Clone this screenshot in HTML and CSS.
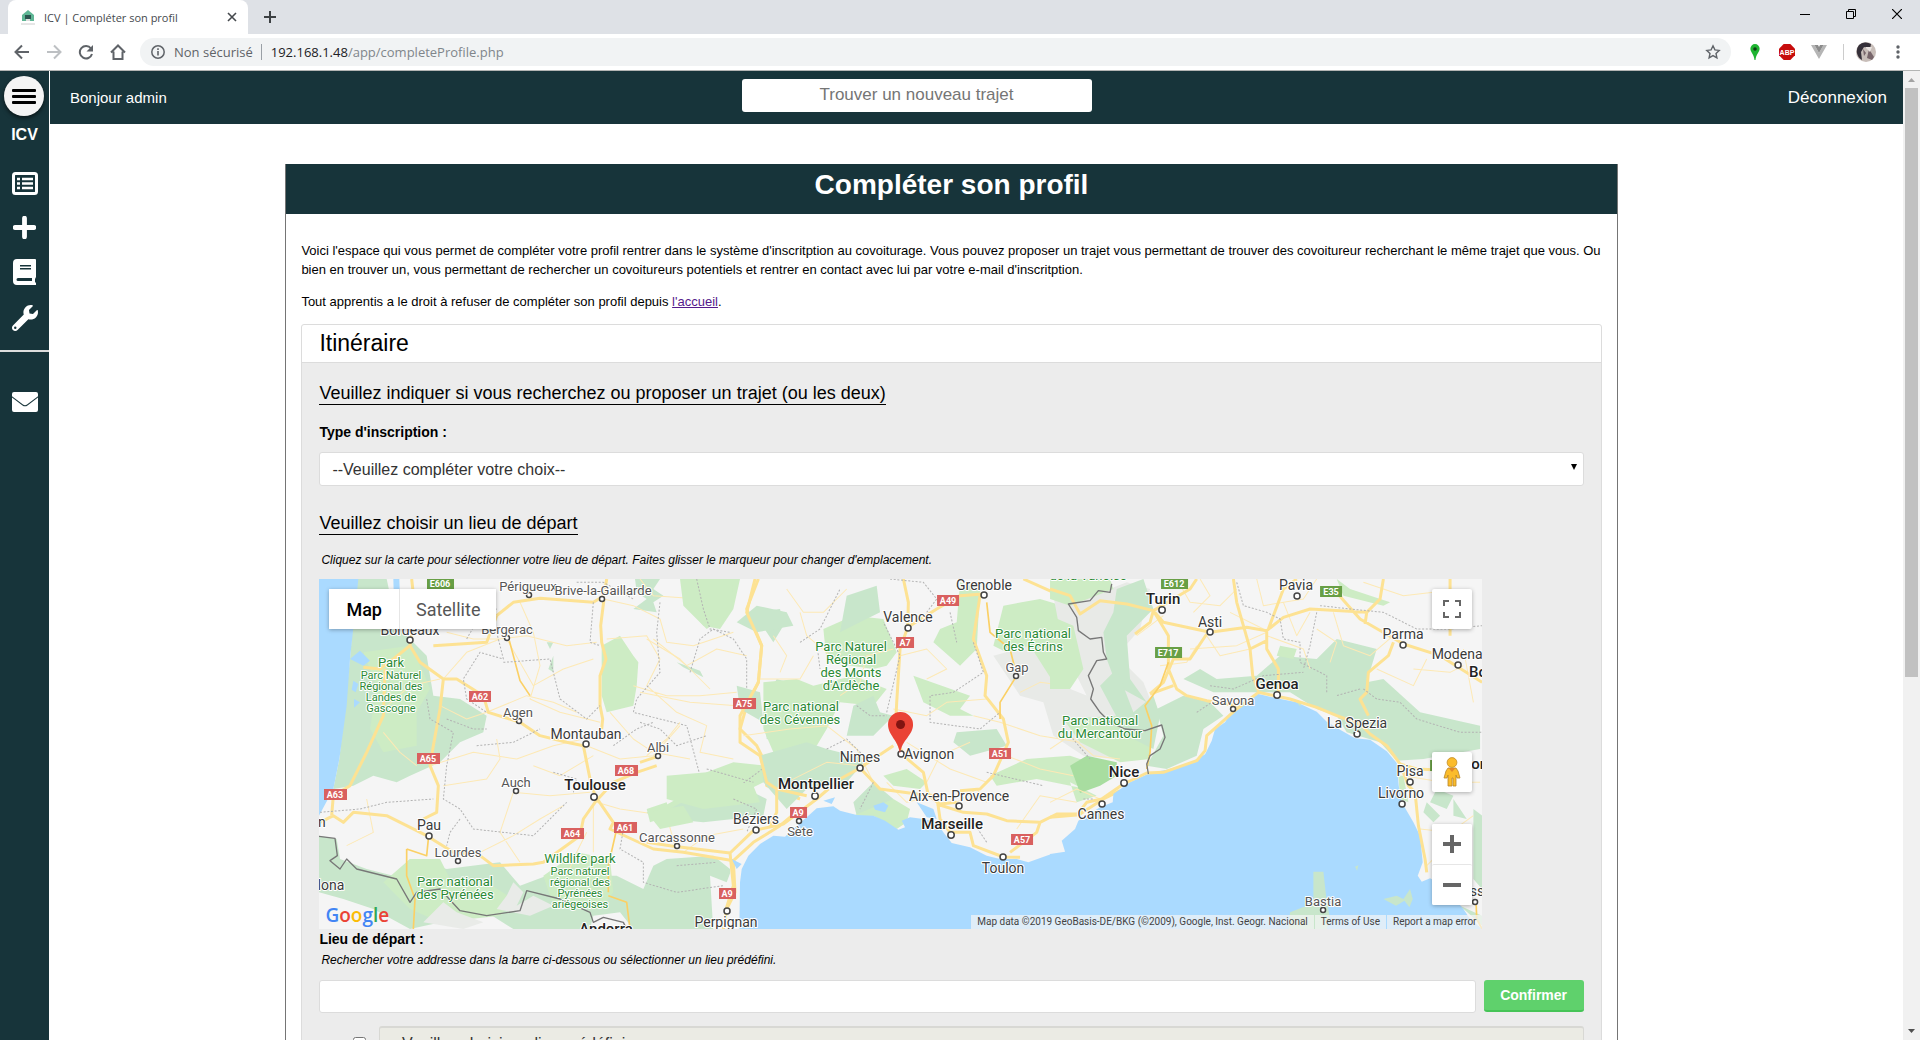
FILE: index.html
```
<!DOCTYPE html>
<html lang="fr">
<head>
<meta charset="utf-8">
<title>ICV | Compléter son profil</title>
<link rel="stylesheet" href="styles.css">
</head>
<body>
<div class="browser">
  <div class="tabstrip">
    <div class="tab">
      <svg class="favicon" viewBox="0 0 14 16"><path d="M1 6 7 1l6 5v6H1z" fill="#5fb695"/><path d="M4 6h6v4H4z" fill="#2b5550"/><path d="M5 10h4v2H5z" fill="#ddd"/><path d="M0 15h14" stroke="#ccc"/></svg>
      <span class="tab-title">ICV | Compléter son profil</span>
      <button class="chrome-btn" aria-label="Fermer l'onglet"><svg width="10" height="10" viewBox="0 0 10 10"><path d="m1 1 8 8M9 1 1 9" stroke="#45494d" stroke-width="1.6"/></svg></button>
    </div>
    <button class="chrome-btn new-tab" aria-label="Nouvel onglet"><svg width="14" height="14" viewBox="0 0 14 14"><path d="M7 1v12M1 7h12" stroke="#3c4043" stroke-width="2"/></svg></button>
    <div class="window-controls">
      <button class="chrome-btn" aria-label="Réduire"><svg width="10" height="10" viewBox="0 0 10 10"><path d="M0 5.500h10" stroke="#000"/></svg></button>
      <button class="chrome-btn" aria-label="Restaurer"><svg width="10" height="10" viewBox="0 0 10 10"><path d="M.5 2.500h7v7h-7zM2.500 2.500v-2h7v7h-2" fill="none" stroke="#000"/></svg></button>
      <button class="chrome-btn" aria-label="Fermer"><svg width="10" height="10" viewBox="0 0 10 10"><path d="m0 0 10 10M10 0 0 10" stroke="#000" stroke-width="1.200"/></svg></button>
    </div>
  </div>
  <div class="toolbar">
    <div class="nav-buttons">
      <button class="chrome-btn" aria-label="Retour"><svg width="16" height="16" viewBox="0 0 16 16"><path d="M15 8H2M8 1.500 1.500 8 8 14.500" fill="none" stroke="#5f6368" stroke-width="2"/></svg></button>
      <button class="chrome-btn" aria-label="Avancer"><svg width="16" height="16" viewBox="0 0 16 16"><path d="M1 8h13M8 1.500 14.500 8 8 14.500" fill="none" stroke="#bdc0c3" stroke-width="2"/></svg></button>
      <button class="chrome-btn" aria-label="Actualiser"><svg width="16" height="16" viewBox="0 0 16 16"><path d="M13 4.500A6.200 6.200 0 1 0 14 10" fill="none" stroke="#5f6368" stroke-width="2"/><path d="M15 1v6.500H8.500z" fill="#5f6368"/></svg></button>
      <button class="chrome-btn" aria-label="Accueil"><svg width="16" height="16" viewBox="0 0 16 16"><path d="M1 8.500 8 1.500l7 7M3.500 7.500V15h9V7.500" fill="none" stroke="#5f6368" stroke-width="2"/></svg></button>
    </div>
    <div class="omnibox">
      <svg width="14" height="14" viewBox="0 0 14 14"><circle cx="7" cy="7" r="6.200" fill="none" stroke="#5f6368" stroke-width="1.500"/><path d="M7 6v4.500M7 3.300V5" stroke="#5f6368" stroke-width="1.600"/></svg>
      <span class="insecure">Non sécurisé</span>
      <span class="address"><span class="host">192.168.1.48</span>/app/completeProfile.php</span>
      <svg class="star" width="16" height="16" viewBox="0 0 16 16"><path d="m8 1.800 1.900 4.100 4.300.5-3.200 3 .9 4.400L8 11.600l-3.900 2.200.9-4.400-3.200-3 4.300-.5z" fill="none" stroke="#5f6368" stroke-width="1.400"/></svg>
    </div>
    <div class="extensions">
      <svg width="16" height="16" viewBox="0 0 16 16"><path d="M8 0a4.600 4.600 0 0 1 4.600 4.700C12.600 8 9 10 8.500 16h-1C7 10 3.400 8 3.400 4.700A4.600 4.600 0 0 1 8 0z" fill="#1eb431"/><circle cx="8" cy="5" r="1.800" fill="#123d16"/></svg>
      <svg width="16" height="16" viewBox="0 0 16 16"><path d="M4.700 0h6.600L16 4.700v6.600L11.300 16H4.700L0 11.300V4.700z" fill="#c70d0d"/><text x="8" y="11" text-anchor="middle" class="abp">ABP</text></svg>
      <svg width="16" height="16" viewBox="0 0 16 16"><path d="M0 1h3.500L8 9l4.500-8H16L8 15z" fill="#b5b5b5"/><path d="M3.500 1H7l1 2 1-2h3.500L8 9z" fill="#8b8b8b"/></svg>
    </div>
    <div class="profile">
      <svg width="20" height="20" viewBox="0 0 20 20"><circle cx="10" cy="10" r="10" fill="#c8beb9"/><path d="M3 3a10 10 0 0 1 12-1l-1 5-6-2-3 5 1 8A10 10 0 0 1 3 3z" fill="#353039"/><path d="m13 7 5 8-2 3-5-2zM7 7l3 4-2 3z" fill="#77656a"/><path d="m9 5 5 5 2-5z" fill="#e9e3e0"/></svg>
      <svg width="4" height="14" viewBox="0 0 4 14"><g fill="#5f6368"><circle cx="2" cy="2" r="1.700"/><circle cx="2" cy="7" r="1.700"/><circle cx="2" cy="12" r="1.700"/></g></svg>
    </div>
  </div>
</div>

<div class="viewport">
  <nav class="sidebar">
    <button class="burger" aria-label="Menu"><span></span><span></span><span></span></button>
    <strong class="brand">ICV</strong>
    <div class="side-links">
      <a href="#" aria-label="Trajets"><svg width="26" height="24" viewBox="0 0 26 24"><rect x="1.500" y="1.500" width="23" height="20" rx="2" fill="none" stroke="#fff" stroke-width="3"/><path d="M5 7h3M5 11.500h3M5 16h3M10 7h11M10 11.500h11M10 16h11" stroke="#fff" stroke-width="2.600"/></svg></a>
      <a href="#" aria-label="Ajouter"><svg width="23" height="23" viewBox="0 0 23 23"><path d="M11.500 2.200v18.600M2.200 11.500h18.600" stroke="#fff" stroke-width="4.800" stroke-linecap="round"/></svg></a>
      <a href="#" aria-label="Guide"><svg width="23" height="26" viewBox="0 0 23 26"><path fill="#fff" fill-rule="evenodd" d="M4 0h18a1 1 0 0 1 1 1v17l-1 2v3l1 1v2H4a4 4 0 0 1-4-4V4a4 4 0 0 1 4-4zm3 6v1.500h11V6zm0 3v1.500h11V9zM5 19a1.500 1.500 0 0 0 0 3h14v-3z"/></svg></a>
      <a href="#" aria-label="Réglages"><svg width="26" height="26" viewBox="0 0 512 512"><path fill="#fff" d="M507.700 109.100c-2.200-9-13.500-12.100-20.100-5.500l-74.400 74.400-67.900-11.300-11.300-67.900 74.400-74.400c6.600-6.600 3.400-17.900-5.700-20.200-47.400-11.700-99.600.9-136.600 37.900-39.600 39.600-50.500 97.100-34.100 147.200L18.700 402.800c-25 25-25 65.500 0 90.500s65.500 25 90.500 0l213.200-213.200c50.100 16.700 107.500 5.700 147.400-34.200 37.100-37.100 49.700-89.300 37.900-136.800zM64 472a24 24 0 1 1 0-48 24 24 0 0 1 0 48z"/></svg></a>
    </div>
    <a href="#" class="mail-link" aria-label="Contact"><svg width="26" height="20" viewBox="0 0 26 20"><path fill="#fff" d="M2 0h22a2 2 0 0 1 2 2v2.200L15 12.500q-2 1.500-4 0L0 4.200V2a2 2 0 0 1 2-2z"/><path fill="#fff" d="M0 5.500 10.500 13.500q2.500 1.700 5 0L26 5.500V18a2 2 0 0 1-2 2H2a2 2 0 0 1-2-2z"/></svg></a>
  </nav>

  <div class="page">
    <header class="topbar">
      <span class="hello">Bonjour admin</span>
      <input class="search" type="text" placeholder="Trouver un nouveau trajet" aria-label="Trouver un nouveau trajet">
      <a class="logout" href="#">Déconnexion</a>
    </header>
    <main class="content">
      <section class="card">
        <h1>Compléter son profil</h1>
        <div class="card-body">
          <p>Voici l'espace qui vous permet de compléter votre profil rentrer dans le système d'inscritption au covoiturage. Vous pouvez proposer un trajet vous permettant de trouver des covoitureur recherchant le même trajet que vous. Ou bien en trouver un, vous permettant de rechercher un covoitureurs potentiels et rentrer en contact avec lui par votre e-mail d'inscritption.</p>
          <p>Tout apprentis a le droit à refuser de compléter son profil depuis <a href="#">l'accueil</a>.</p>
          <form class="panel">
            <h2>Itinéraire</h2>
            <div class="panel-body">
              <h3>Veuillez indiquer si vous recherchez ou proposer un trajet (ou les deux)</h3>
              <label class="field-label" for="type">Type d'inscription :</label>
              <div class="select-wrap">
                <select id="type" class="control"><option>--Veuillez compléter votre choix--</option></select>
                <svg class="caret" width="6" height="6" viewBox="0 0 6 6"><path d="M0 0h6L3 6z"/></svg>
              </div>
              <h3>Veuillez choisir un lieu de départ</h3>
              <p class="hint">Cliquez sur la carte pour sélectionner votre lieu de départ. Faites glisser le marqueur pour changer d'emplacement.</p>

              <div class="map">
                <svg class="map-canvas" viewBox="319 580 1163 350" preserveAspectRatio="xMidYMid slice" role="img" aria-label="Carte">
                  <rect x="0" y="500" width="1920" height="500" fill="#f5f5f5"/>
                  <!-- south-west France -->
                  <g transform="translate(300 500) scale(.33333)">
                    <path class="wood" d="M170 240H260L290 380 380 470 400 590 480 600 560 650 550 700 480 730 420 790 330 830 290 850 220 830 160 860 100 870 118 780 150 480z"/>
                    <path class="park" d="M190 460 330 440 370 520 390 570 350 640 350 740 250 760 210 690 230 560z"/>
                    <path class="park" d="M905 440 960 410 1000 470 1015 490 1010 560 1000 620 920 640 905 590zM1150 240H1320L1300 330 1260 390 1210 380 1150 310zM1060 940 1130 900 1220 820 1300 790 1400 800 1430 830 1330 880 1210 900 1190 960z"/>
                    <path class="wood" d="M1005 240H1080L1060 270 1090 290 1060 310 1070 340 1000 330 1040 300 1010 280zM1360 340 1440 330 1450 380 1420 430 1380 370zM740 430h20l-10 20zM760 470v50l-15-10zM1130 490 1200 515 1210 535 1150 505zM1390 620 1430 540 1500 560 1500 740 1400 720z"/>
                    <path class="wood" d="M1180 890 1340 870 1400 900 1390 950 1210 970 1110 960 1110 930zM1100 1080 1240 1070 1290 1110 1300 1290H860L640 1290 560 1240 330 1290 220 1230 130 1200 57 1180V1010L110 1020 120 1080 200 1110 280 1130 330 1080 440 1110 600 1090 660 1160 740 1130 950 1130 1030 1170 1060 1100z"/>
                    <path class="park" d="M250 1150 330 1080 420 1080 450 1140 560 1150 640 1200 600 1250 420 1270 330 1230zM730 1130 830 1060 930 1080 940 1180 900 1230 760 1220zM1040 930 1100 910 1110 950 1050 970z"/>
                    <path fill="#e9ebe8" d="M640 1150 670 1180 650 1220 700 1190 760 1220 690 1250 590 1230 620 1190zM370 1270l60-60 40 30 80 30-60 20z"/>
                    <path fill="#f5f5f5" d="M880 1250 960 1240 1000 1290H870zM1230 1130l50 20 30-80 50 10-50 220h-70z"/>
                    <path class="water" d="M57 240H175L165 340 150 480 140 620 118 780 100 870 57 950zM150 480l30-25 30 30-20 15zM160 545l15 10-8 25-12-8zM162 600l18 10-18 16zM280 240h18l2 55-18 20z"/>
                    <path class="minor" d="M440 400 520 420 600 420 680 410 800 440 890 430M620 420 700 560 790 510 880 480M430 540 500 460 600 420M660 310 700 400 720 500 690 600 780 640 900 670M560 640 680 590 760 610 830 640M910 300 1000 320 1080 360 1100 430 1180 440 1300 400M1000 560 1100 590 1200 590 1310 580M920 420 1040 410 1080 480 1040 560 1130 640 1220 680 1200 760 1300 780M390 800 520 760 650 780 760 740 850 720M430 860 560 840 600 780 590 720M640 880 750 890 870 880M640 880 600 1000 660 1090M540 1060 640 1010 720 960 790 920M880 920 880 1060M890 910 960 930 1100 950 1130 1060M200 900 220 1000 140 1040M420 620 500 660 560 640M240 640 330 560 420 540M930 640 1000 720 1060 760 1170 780M860 740 960 780 1060 770 1140 680M880 770 780 830 700 800M1150 1060 1220 1010 1330 990M800 1130 830 1060 860 1000M250 700 300 760 350 800M1060 420 1160 500 1250 450 1340 470M1020 240 1060 290 1200 300"/>
                    <path class="road" d="M920 240 912 290M912 300 902 380 905 430 918 480 900 530 900 620 908 660 905 690M912 290 880 310 720 298 640 310 590 350M590 350 560 430 400 440M335 240 345 330 330 440M330 440 360 490 430 540 470 540 550 590 565 640 660 670 720 710 800 730 850 740 870 840 885 890M330 440 280 480 240 510 190 505M430 540 420 630 400 740 390 800 415 860 410 940 370 960M255 510 250 650 200 760 150 860 100 890 95 950M60 970 100 950 130 970 160 940 260 950 380 1010 460 1060 540 1070 580 1100 700 1095 730 1090 840 1010 850 960 885 910 940 850 1010 820 1070 800M885 890 940 970 930 990 1060 1050 1150 1060 1300 1085 1360 1030 1440 980 1500 930M1300 1085 1305 1180 1280 1230 1270 1290M1375 240 1340 330 1385 440 1375 550 1340 620 1320 690 1370 740 1395 790 1400 860 1500 900"/>
                    <path class="gold" d="M628 425 660 545 690 590M320 1050 380 1070 385 1020M320 1050 320 1130 345 1200 340 1290M925 1190 980 1210 990 1290M950 990 925 1100 925 1180"/>
                    <path class="admin" d="M500 420 540 350 590 330M590 400 610 480 540 460 490 540 500 600 560 640M610 490 750 480 780 600 860 660 900 620M880 310 870 430 900 440M830 250 910 250 1000 300M1170 520 1200 420 1240 390 1300 420 1340 480 1340 610M1080 310 1070 400 1080 520 1010 600 1000 640 1160 680 1200 830 1320 860 1400 800M440 660 520 690 560 690M380 600 390 660 460 700 440 800 430 900 480 930 520 990 700 1010 800 910M530 740 640 730 720 690M760 820 830 840 820 880M940 740 1010 690 1060 670M60 940 180 930 260 910 400 900M480 960 450 1000 440 1040M970 990 960 1050 1030 1090 1030 1150 1130 1180 1270 1160"/>
                    <path class="border" d="M57 1012 105 1018 112 1070 90 1085 120 1110 140 1080 170 1110 290 1140 330 1210 350 1180 420 1170 480 1235 560 1250 660 1235 680 1175 780 1200 870 1240 880 1270 910 1255 970 1270 980 1290"/>
                  </g>
                  <!-- Languedoc, Rhone valley and Provence -->
                  <g transform="translate(640 570) scale(.33333)">
                    <path class="park" d="M120 30H280L270 130 200 180 130 110zM550 180 640 140 730 150 770 250 740 290 700 300 560 280zM370 340 470 330 520 350 640 320 740 360 700 410 600 400 560 480 530 530 400 550 370 480zM820 320 990 380 960 420 1000 440 930 440 850 400zM960 40 1020 60 1010 240 960 290 880 220 900 180 950 160zM1090 110 1200 90 1300 120 1340 250 1300 340 1180 350 1120 260 1060 230z"/>
                    <path class="wood" d="M290 160 350 110 440 130 460 170 350 190zM620 80 710 50 720 130 600 190zM640 410 700 380 720 430 760 440 700 500 620 500zM290 350 360 370 370 460 300 420zM950 490 1070 480 1100 530 990 560 940 520zM360 560 500 520 560 540 680 570 620 640 500 660 440 720 370 640zM640 700 700 640 760 690 740 740 650 740z"/>
                    <path class="park" d="M730 620 800 600 860 640 840 660 760 650zM640 740 760 690 810 720 800 760 770 780 700 740zM80 620 200 610 340 650 360 700 190 720 80 690zM1050 620 1160 570 1290 560 1380 590 1340 660 1190 630 1070 650zM1310 700 1370 680 1290 640zM20 730 130 710 160 760 60 780z"/>
                    <path class="terrain" d="M1060 260 1170 230 1240 340 1390 400 1420 570 1330 560 1240 500 1210 400 1140 380zM1240 80 1300 110 1430 200 1440 420 1340 380 1270 240z"/>
                    <path class="water" d="M298 1080 300 940 305 900 325 860 360 825 400 800 435 803 465 775 500 745 530 718 580 712 600 725 650 738 700 740 735 755 775 782 795 775 785 755 810 745 850 750 890 760 910 790 935 822 990 835 1040 860 1080 870 1130 870 1165 880 1232 856V1080zM830 700 880 720 890 750 860 745zM700 710l30-10 15 10-10 20-30-8zM550 695l35-10-10 20zM275 870l30 15-15 15z"/>
                    <path class="minor" d="M440 60 490 130 550 130 620 60M400 200 440 260 420 310M480 130 500 200 570 260M760 240 680 260 660 340 600 380M120 460 80 510 20 560M350 330 480 330 520 260M310 500 450 480 560 470 650 540 700 640M660 590 560 580 440 640 410 660M780 260 860 240 920 300 860 330M760 420 860 440 920 400 1040 390M800 520 930 600 1040 640M950 700 1010 660 1040 700M1000 440 1080 460 1200 500 1320 520M880 680 800 700 740 640M0 370 150 400 290 410M20 210 120 270 210 360M1100 560 1200 600 1300 620M860 640 900 560 990 520M1140 370 1200 340 1280 350M1130 780 1200 680 1310 700"/>
                    <path class="road" d="M345 30 320 130 365 230 355 340 300 440 300 520 360 560 380 640 410 660 500 680M410 660 410 730 390 770M790 30 805 100 803 175 780 240 770 400 765 500 790 560 850 610 865 680 900 705 950 700M803 175 890 120 960 80 1030 75M1020 80 1000 210 1040 320 1035 380 1090 450 1105 520 1060 620 1020 660 960 665M0 580 60 560M20 820 100 832 270 852 340 785 430 765 530 690 600 630 660 597 760 530M660 597 720 660 830 675 890 680 900 750 930 790 990 790 1000 830 1090 864 1140 865M890 705 970 730 1040 735 1100 755 1200 760 1250 735 1320 735 1390 690 1440 665M1200 760 1190 790 1110 850M270 852 280 950 255 1030M1150 30 1240 70 1330 90"/>
                    <path class="gold" d="M1040 100 1050 190 1110 240 1130 320 1080 400 1080 450"/>
                    <path class="admin" d="M170 30 190 120 210 180 270 190M480 220 540 180 600 60M530 220 540 300M740 430 780 260 730 160M650 410 690 440 740 440M750 30 850 40 890 90 860 130M1000 220 1030 310 940 370 870 380 870 460 1020 480 1080 430M930 130 950 220M0 460 60 480 110 530 200 500M200 600 340 640M560 540 620 510 670 560M700 640 660 720M280 690 350 720 320 790M110 890 230 880M1040 610 1210 650M1000 760 1040 820"/>
                  </g>
                  <!-- Alps, Liguria and Tuscany -->
                  <g transform="translate(1050 570) scale(.33333)">
                    <path class="terrain" d="M50 110 230 40 300 60 270 180 200 260 280 340 320 440 250 500 170 440 110 330 160 270 140 210 60 170z"/>
                    <path class="wood" d="M200 60 280 30 310 120 230 200 240 330 290 400 200 350 170 270 160 190 190 130zM320 420 400 380 480 400 520 440 460 480 440 560 350 600 290 590 340 500zM400 330 450 300 500 330 620 320 690 260 800 270 860 210 980 240 950 340 1000 330 1110 430 1290 470 1290 540 1120 570 1040 575 990 520 890 490 860 440 800 420 720 370 600 370 490 370z"/>
                    <path class="park" d="M0 30H180L190 60 60 110 0 90zM690 230 740 240 730 270 680 260zM0 140 70 170 100 300 60 360 0 360zM40 450 200 440 300 480 300 570 210 580 90 520zM860 30 900 60 1020 100 1000 110 880 80zM1045 620 1060 620 1075 700 1050 690z"/>
                    <path class="wood" d="M150 350 200 300 250 430 310 380 330 440 310 540 230 500zM1160 660 1210 680 1190 720 1140 700zM1130 700 1170 740 1150 760 1120 730zM1210 690 1250 750 1210 740zM1270 720 1296 740V960L1270 930zM1230 1010 1296 1040V1070z"/>
                    <path fill="#a8dda0" d="M60 590 110 560 200 580 200 620 150 650 90 672z"/>
                    <path class="water" d="M0 1080V855L45 848 35 815 75 780 85 755 150 715 188 700 190 675 240 640 300 612 350 602 420 582 465 556 485 515 495 480 525 460 548 422 580 402 625 375 680 388 740 400 800 428 830 458 870 482 915 508 960 512 1010 547 1040 582 1046 650 1055 700 1090 760 1110 800 1118 880 1103 920 1115 938 1140 928 1180 950 1240 1020 1260 1050 1296 1080z"/>
                    <path class="wood" d="M790 908h30l10 90 10 50-10 32H715l5-50 50-20 20-10zM1000 990l40-10 20 10 20-30 8 30-10 25-15-20-25 15zM915 893l10-4-4 16zM738 398h20l-8 14z"/>
                    <path class="minor" d="M380 30 420 100 510 110 560 60M620 30 640 110 760 90 800 30M0 700 80 660 150 690M470 200 510 260 600 240M340 140 260 200M700 100 740 200 780 130M850 130 880 230 960 260 1030 200M940 40 1060 80 1150 70M1090 300 1200 310 1240 290M1240 240 1270 400M450 30 480 80 430 130M650 190 560 230 420 240M1060 620 1180 640 1290 640M1110 780 1200 790 1270 740M1130 890 1200 820 1230 790M0 540 60 500 130 560 210 570M330 290 410 280 440 230M540 130 640 180M650 200 760 240 780 300M800 180 860 220 840 280M980 300 1090 350 1130 270"/>
                    <path class="road" d="M0 60 60 80 90 135 150 95 230 105 310 125 340 160 480 190 590 175 650 185 700 145 780 120 950 130 990 90 1000 30M550 30 560 100 580 170 600 240 608 320 625 365M650 185 650 240 685 300 685 380M310 125 355 200 355 300 380 360 410 380 470 395 560 410M310 125 420 60 440 30M310 125 300 160 255 195M470 195 420 270 370 270 340 340 300 375M600 240 650 215M740 30 700 60 655 180M850 60 930 150 1060 225 1170 260 1296 340M1030 220 1015 260 955 310 950 370 930 390 955 440M1200 30 1200 200M950 130 945 165M300 375 370 350M0 745 80 738 110 700 155 690 220 645 290 612 340 610 440 575 465 545 470 500 560 420 625 370 720 390 800 415 860 440 930 465 960 495 1010 530 1050 585 1100 600 1150 602M1050 585 1075 650 1095 670 1105 770 1125 870 1130 910"/>
                    <path class="gold" d="M355 280 330 350 285 410 305 470 300 550 290 600M1278 1000 1280 1050 1296 1080"/>
                    <path class="admin" d="M560 40 580 110 650 130 690 150 700 210 750 220 750 280 830 320 830 370M800 130 780 230 760 300M440 430 500 390M480 350 550 360 640 320 760 310M810 110 900 120 1000 130 1100 180 1200 180 1296 170M940 360 980 390 1050 400 1100 450 1230 490 1296 490M930 360 860 380M60 500 120 570M100 690 130 690"/>
                    <path class="border" d="M185 45 180 70 145 65 120 95 55 105 80 145 85 185 120 210 155 205 160 250 170 270 140 275 115 320 130 360 122 390 150 430 180 460 225 480 285 485 335 468 345 505 330 540 300 560 290 585 295 615"/>
                  </g>
                  <!-- town dots -->
                  <g class="dots">
                    <circle cx="410" cy="641" r="3"/><circle cx="529" cy="596" r="2.500"/><circle cx="602" cy="600" r="2.500"/><circle cx="507" cy="639" r="2.500"/><circle cx="519" cy="722" r="2.500"/><circle cx="586" cy="745" r="3"/><circle cx="658" cy="757" r="2.500"/><circle cx="516" cy="792" r="2.500"/><circle cx="594" cy="798" r="3.200"/><circle cx="429" cy="837" r="3"/><circle cx="458" cy="862" r="2.500"/><circle cx="677" cy="847" r="2.500"/><circle cx="756" cy="831" r="3"/><circle cx="727" cy="912" r="3"/><circle cx="799" cy="822" r="2.500"/><circle cx="815" cy="797" r="3.200"/><circle cx="860" cy="769" r="3"/><circle cx="901" cy="755" r="3"/><circle cx="908" cy="629" r="3"/><circle cx="984" cy="596" r="3"/><circle cx="1016" cy="677" r="2.500"/><circle cx="959" cy="807" r="3"/><circle cx="951" cy="836" r="3.200"/><circle cx="1003" cy="858" r="3"/><circle cx="1102" cy="805" r="3"/><circle cx="1124" cy="784" r="3.200"/><circle cx="1162" cy="611" r="3.200"/><circle cx="1210" cy="633" r="3"/><circle cx="1297" cy="597" r="3"/><circle cx="1403" cy="646" r="3"/><circle cx="1458" cy="666" r="3"/><circle cx="1277" cy="696" r="3.200"/><circle cx="1233" cy="710" r="2.500"/><circle cx="1357" cy="735" r="3"/><circle cx="1410" cy="783" r="3"/><circle cx="1402" cy="805" r="3"/><circle cx="1323" cy="911" r="2.500"/><circle cx="1475" cy="903" r="2.500"/>
                  </g>
                  <g class="town small">
                    <text x="528" y="592">Périgueux</text><text x="603" y="596">Brive-la-Gaillarde</text><text x="507" y="635">Bergerac</text><text x="518" y="718">Agen</text><text x="658" y="753">Albi</text><text x="516" y="788">Auch</text><text x="458" y="858">Lourdes</text><text x="677" y="843">Carcassonne</text><text x="800" y="837">Sète</text><text x="1017" y="673">Gap</text><text x="1233" y="706">Savona</text><text x="1323" y="907">Bastia</text>
                  </g>
                  <g class="town">
                    <text x="410" y="636">Bordeaux</text><text x="586" y="740">Montauban</text><text x="429" y="831">Pau</text><text x="756" y="825">Béziers</text><text x="726" y="928">Perpignan</text><text x="331" y="891">lona</text><text x="322" y="828">n</text><text x="860" y="763">Nimes</text><text x="929" y="760">Avignon</text><text x="908" y="623">Valence</text><text x="984" y="591">Grenoble</text><text x="959" y="802">Aix-en-Provence</text><text x="1003" y="874">Toulon</text><text x="1101" y="820">Cannes</text><text x="1210" y="628">Asti</text><text x="1296" y="591">Pavia</text><text x="1403" y="640">Parma</text><text x="1457" y="660">Modena</text><text x="1357" y="729">La Spezia</text><text x="1410" y="777">Pisa</text><text x="1401" y="799">Livorno</text><text x="1477" y="897">ss</text>
                  </g>
                  <g class="town big">
                    <text x="595" y="791">Toulouse</text><text x="816" y="790">Montpellier</text><text x="952" y="830">Marseille</text><text x="1124" y="778">Nice</text><text x="1163" y="605">Turin</text><text x="1277" y="690">Genoa</text><text x="606" y="935">Andorra</text><text x="1478" y="678">Bo</text><text x="1478" y="770">or</text>
                  </g>
                  <g class="green">
                    <text x="391" y="668">Park</text><text x="851" y="652">Parc Naturel</text><text x="851" y="665">Régional</text><text x="851" y="678">des Monts</text><text x="851" y="691">d'Ardèche</text><text x="801" y="712">Parc national</text><text x="800" y="725">des Cévennes</text><text x="1033" y="639">Parc national</text><text x="1033" y="652">des Écrins</text><text x="1100" y="726">Parc national</text><text x="1100" y="739">du Mercantour</text><text x="455" y="887">Parc national</text><text x="455" y="900">des Pyrénées</text><text x="580" y="864">Wildlife park</text><text x="1088" y="581">de la Vanoise</text>
                  </g>
                  <g class="green tiny">
                    <text x="391" y="680">Parc Naturel</text><text x="391" y="691">Régional des</text><text x="391" y="702">Landes de</text><text x="391" y="713">Gascogne</text><text x="580" y="876">Parc naturel</text><text x="580" y="887">régional des</text><text x="580" y="898">Pyrénées</text><text x="580" y="909">ariégeoises</text>
                  </g>
                  <g fill="#d9605f">
                    <path d="M469 692h22v11h-22zM733 699h23v11h-23zM417 754h23v11h-23zM324 790h23v11h-23zM615 766h23v11h-23zM614 823h23v11h-23zM561 829h23v11h-23zM719 889h17v11h-17zM790 808h17v11h-17zM896 638h18v11h-18zM937 596h22v11h-22zM989 749h22v11h-22zM1011 835h22v11h-22z"/>
                  </g>
                  <path fill="#689f45" d="M427 580h27v10h-27zM1161 580h27v10h-27zM1320 587h22v11h-22zM1155 648h27v11h-27zM1430 761h6v11h-6z"/>
                  <g class="shield">
                    <text x="480" y="701">A62</text><text x="744" y="708">A75</text><text x="428" y="763">A65</text><text x="335" y="799">A63</text><text x="626" y="775">A68</text><text x="625" y="832">A61</text><text x="572" y="838">A64</text><text x="727" y="898">A9</text><text x="798" y="817">A9</text><text x="905" y="647">A7</text><text x="948" y="605">A49</text><text x="1000" y="758">A51</text><text x="1022" y="844">A57</text><text x="440" y="588">E606</text><text x="1174" y="588">E612</text><text x="1331" y="596">E35</text><text x="1168" y="657">E717</text>
                  </g>
                  <path d="M900 713a12.500 12.500 0 0 1 13 12.500c0 11-11 15-13 29-2-14-12-18-12-29A12.500 12.500 0 0 1 900 713z" fill="#ea4335"/><circle cx="900.500" cy="725.500" r="4.500" fill="#811411"/>
                </svg>
                <div class="map-types"><button type="button" class="active">Map</button><button type="button">Satellite</button></div>
                <div class="map-tools">
                  <button type="button" aria-label="Plein écran"><svg width="18" height="18" viewBox="0 0 18 18"><path d="M1 6V1H6M12 1h5V6M17 12v5H12M6 17H1V12" fill="none" stroke="#666" stroke-width="2"/></svg></button>
                  <button type="button" class="pegman" aria-label="Street View"><svg width="18" height="30" viewBox="0 0 18 30"><path d="M5 11h8l2 3 2 7h-3l-1-3v11h-3v-8H9v8H5V18l-1 3H1l2-7z" fill="#fbbc2c" stroke="#b7862a" stroke-width=".8"/><path d="m5.500 11 3.500 4 3.500-4z" fill="#e1882c"/><circle cx="9" cy="5.500" r="4.900" fill="#fbbc2c" stroke="#c28b27" stroke-width=".8"/></svg></button>
                  <div class="zoomer">
                    <button type="button" aria-label="Zoom avant"><svg width="18" height="18" viewBox="0 0 18 18"><path d="M9 0v18M0 9h18" stroke="#666" stroke-width="4"/></svg></button>
                    <button type="button" aria-label="Zoom arrière"><svg width="18" height="18" viewBox="0 0 18 18"><path d="M0 9h18" stroke="#666" stroke-width="4"/></svg></button>
                  </div>
                </div>
                <div class="google"><span class="b">G</span><span class="r">o</span><span class="y">o</span><span class="b">g</span><span class="g">l</span><span class="r">e</span></div>
                <div class="attribution"><span>Map data ©2019 GeoBasis-DE/BKG (©2009), Google, Inst. Geogr. Nacional</span><a href="#">Terms of Use</a><a href="#">Report a map error</a></div>
              </div>

              <label class="field-label place-label" for="lieu">Lieu de départ :</label>
              <p class="hint search-hint">Rechercher votre addresse dans la barre ci-dessous ou sélectionner un lieu prédéfini.</p>
              <div class="address-row">
                <input id="lieu" class="control" type="text">
                <button type="button" class="confirm">Confirmer</button>
              </div>
              <div class="preset-row">
                <input type="checkbox" aria-label="Utiliser un lieu prédéfini">
                <select class="preset" aria-label="Lieu prédéfini" disabled><option>--Veuillez choisir un lieu prédéfini--</option></select>
              </div>
            </div>
          </form>
        </div>
      </section>
    </main>
  </div>

  <div class="scrollbar" aria-hidden="true">
    <svg width="7" height="4" viewBox="0 0 7 4"><path d="M0 4h7L3.500 0z" fill="#a3a3a3"/></svg>
    <div class="track"><div class="thumb"></div></div>
    <svg width="7" height="4" viewBox="0 0 7 4"><path d="M0 0h7L3.500 4z" fill="#505050"/></svg>
  </div>
</div>
</body>
</html>
```
FILE: styles.css
```
* { box-sizing: border-box; }

body {
  margin: 0;
  height: 100vh;
  display: flex;
  flex-direction: column;
  overflow: hidden;
  background: #fff;
  color: #000;
  font: 13px/19px "Liberation Sans", Arial, sans-serif;
}

button { font-family: inherit; cursor: pointer; }
svg { display: block; flex: none; }

/* Browser chrome */
.browser { flex: none; border-bottom: 1px solid #b3b5b4; font-family: "Open Sans", "Noto Sans", sans-serif; }
.chrome-btn { display: flex; padding: 0; border: 0; background: none; }
.tabstrip { display: flex; align-items: center; height: 34px; padding-left: 8px; background: #dee1e6; }
.tab {
  display: flex;
  align-items: center;
  width: 240px;
  height: 34px;
  padding: 0 11px 0 13px;
  border-radius: 8px 8px 0 0;
  background: #fff;
}
.favicon { width: 14px; height: 16px; }
.tab-title { flex: 1; margin-left: 9px; font-size: 11px; color: #45494d; white-space: nowrap; }
.new-tab { margin-left: 15px; }
.window-controls { display: flex; gap: 36px; margin: 0 18px 6px auto; }

.toolbar { display: flex; align-items: center; height: 36px; background: #fff; }
.nav-buttons { display: flex; gap: 16px; padding: 0 14px; }
.omnibox {
  flex: 1;
  display: flex;
  align-items: center;
  height: 28px;
  padding: 0 10px 0 11px;
  border-radius: 14px;
  background: #f1f3f4;
  font-size: 13px;
  color: #80868b;
}
.insecure { margin-left: 9px; padding-right: 8px; border-right: 1px solid #9aa0a6; line-height: 16px; color: #5f6368; }
.address { margin-left: 9px; }
.host { color: #202124; }
.star { margin-left: auto; }
.extensions { display: flex; gap: 16px; padding: 0 16px; }
.abp { font: bold 7px "Liberation Sans", sans-serif; fill: #fff; }
.profile { display: flex; align-items: center; gap: 20px; height: 16px; padding: 0 20px 0 12px; border-left: 1px solid #ccc; }

/* App frame */
.viewport { flex: 1; min-height: 0; display: flex; }
.sidebar {
  flex: none;
  width: 50px;
  display: flex;
  flex-direction: column;
  background: #17343a;
  border-right: 1px solid #fff;
}
.burger {
  display: flex;
  flex-direction: column;
  align-items: center;
  justify-content: center;
  gap: 3px;
  width: 40px;
  height: 40px;
  margin: 5px 4px 0;
  padding: 0;
  border: 0;
  border-radius: 50%;
  background: #f4f4f4;
  box-shadow: 0 2px 4px rgba(0, 0, 0, .6);
}
.burger span { width: 24px; height: 3px; border-radius: 1px; background: #000; }
.brand { margin-top: 9px; font-size: 16px; line-height: 20px; text-align: center; color: #fff; }
.side-links {
  display: flex;
  flex-direction: column;
  align-items: center;
  gap: 20px;
  margin-top: 27px;
  padding-bottom: 19px;
  border-bottom: 2px solid #ddd;
}
.mail-link { align-self: center; margin-top: 40px; }

.page { flex: 1; min-width: 0; overflow: hidden; }
.topbar {
  display: grid;
  grid-template-columns: 1fr 350px 1fr;
  align-items: center;
  height: 53px;
  padding: 0 16px 0 20px;
  background: #17343a;
  color: #fff;
}
.hello { font-size: 15px; }
.search {
  position: relative;
  right: 62px;
  height: 33px;
  margin: 0 0 5px;
  border: 0;
  border-radius: 3px;
  background: #fff;
  font: 17px "Liberation Sans", Arial, sans-serif;
  text-align: center;
}
.search::placeholder { color: #757575; }
.logout { justify-self: end; font-size: 17px; color: #fff; text-decoration: none; }

.content { padding: 40px 50px 0 0; }
.card { width: calc(74% - 2px); margin: 0 auto; border: solid #757575; border-width: 0 1px; }
.card h1 {
  height: 50px;
  margin: 0;
  background: #17343a;
  color: #fff;
  font-size: 28px;
  line-height: 42px;
  text-align: center;
}
.card-body { padding: 27px 15px 0; }
.card-body > p { margin: 0 0 13px; }
.card-body > p a { color: #551a8b; }

/* Form */
.panel { border: 1px solid #dcdcdc; border-radius: 3px 3px 0 0; }
.panel h2 {
  height: 38px;
  margin: 0;
  padding-left: 17px;
  border-bottom: 1px solid #dcdcdc;
  font-size: 23px;
  font-weight: 400;
  line-height: 37px;
}
.panel-body { padding: 19px 17px 40px; background: #ececec; }
.panel h3 {
  width: fit-content;
  margin: 0;
  border-bottom: 1px solid #000;
  font-size: 18px;
  font-weight: 400;
  line-height: 22px;
}
.field-label { display: block; width: fit-content; margin-top: 18px; font-size: 14px; font-weight: 700; }
.control {
  width: 100%;
  height: 33px;
  padding: 0 12px;
  border: 1px solid #dcdcdc;
  border-radius: 3px;
  background: #fff;
  font: 16px "Liberation Sans", Arial, sans-serif;
  color: #333;
  appearance: none;
}
.select-wrap { position: relative; margin: 10px 0 26px; }
.select-wrap .control { display: block; height: 34px; }
.caret { position: absolute; right: 7px; top: 12px; pointer-events: none; }
.hint { margin: 16px 0 10px 2px; font-size: 12px; font-style: italic; }
.panel h3 + .hint { margin-bottom: 9px; }
.place-label { margin-top: 1px; }
.search-hint { margin-top: 2px; margin-bottom: 10px; }
.address-row { display: flex; gap: 8px; }
.address-row .control { flex: 1; min-width: 0; }
.confirm {
  width: 100px;
  height: 32px;
  padding: 0;
  border: 0;
  border-bottom: 2px solid #46c457;
  border-radius: 3px;
  background: #5fd16c;
  color: #fff;
  font-size: 14px;
  font-weight: 700;
}
.preset-row { display: flex; gap: 13px; margin-top: 13px; padding-left: 34px; }
.preset-row input { width: 13px; height: 13px; margin: 11px 0 0; }
.preset {
  flex: 1;
  height: 34px;
  padding: 0 11px;
  border: 1px solid #d8d8d4;
  border-top-width: 2px;
  border-radius: 3px;
  background: #ebebe4;
  font: 16px "Liberation Sans", Arial, sans-serif;
  color: #333;
  opacity: 1;
  appearance: none;
}

/* Map */
.map { position: relative; width: 92%; height: 350px; overflow: hidden; font-family: Roboto, sans-serif; }
.map-canvas { width: 100%; height: 100%; }
.wood { fill: #c8e6cb; }
.park { fill: #cdecc4; }
.terrain { fill: #e8eae7; }
.water { fill: #aadaff; }
.minor, .road, .gold, .admin, .border { fill: none; stroke-linejoin: round; }
.minor { stroke: #fde9b5; stroke-width: 3; }
.road { stroke: #fde293; stroke-width: 9; }
.gold { stroke: #fbd065; stroke-width: 5; }
.admin { stroke: #b3b3b3; stroke-width: 3; stroke-dasharray: 6 5; }
.border { stroke: #777; stroke-width: 4; }
.dots { fill: #fff; stroke: #444; stroke-width: 1.5px; }
.town, .green { text-anchor: middle; paint-order: stroke; stroke: #fff; stroke-width: 2px; stroke-linejoin: round; }
.town { font-size: 14px; fill: #3a3a3a; }
.small { font-size: 13px; fill: #555; }
.big { font-size: 15px; font-weight: 500; fill: #222; }
.green { font-size: 13px; fill: #2b8a35; }
.tiny { font-size: 11px; }
.shield { font-size: 9px; font-weight: 700; fill: #fff; text-anchor: middle; }

.map-types { position: absolute; left: 10px; top: 10px; display: flex; box-shadow: 0 1px 4px rgba(0, 0, 0, .3); }
.map-types button { height: 40px; padding: 0 16px; border: 0; background: #fff; color: #565656; font: 18px Roboto, sans-serif; }
.map-types .active { padding: 0 17px; border-right: 1px solid #e6e6e6; color: #000; font-weight: 500; }
.map-tools { position: absolute; top: 10px; right: 10px; width: 40px; }
.map-tools button {
  display: flex;
  align-items: center;
  justify-content: center;
  width: 40px;
  height: 40px;
  padding: 0;
  border: 0;
  border-radius: 2px;
  background: #fff;
  box-shadow: 0 1px 4px rgba(0, 0, 0, .3);
}
.map-tools .pegman { margin-top: 123px; }
.zoomer { margin-top: 32px; background: #fff; border-radius: 2px; box-shadow: 0 1px 4px rgba(0, 0, 0, .3); }
.zoomer button { box-shadow: none; }
.zoomer button + button { border-top: 1px solid #e6e6e6; height: 41px; }
.google { position: absolute; left: 6px; bottom: 2px; font: 600 19px/24px "Open Sans", sans-serif; }
.b { color: #4285f4; }
.r { color: #ea4335; }
.y { color: #fbbc05; }
.g { color: #34a853; }
.attribution { position: absolute; right: 0; bottom: 0; display: flex; gap: 1px; font-size: 10px; line-height: 14px; }
.attribution > * { padding: 0 6px; background: rgba(245, 245, 245, .7); color: #444; text-decoration: none; }

/* Page scrollbar */
.scrollbar {
  flex: none;
  width: 17px;
  display: flex;
  flex-direction: column;
  align-items: center;
  padding: 7px 0;
  background: #f1f1f1;
}
.track { flex: 1; width: 13px; padding: 6px 0; }
.thumb { height: 63%; background: #c1c1c1; }
```
